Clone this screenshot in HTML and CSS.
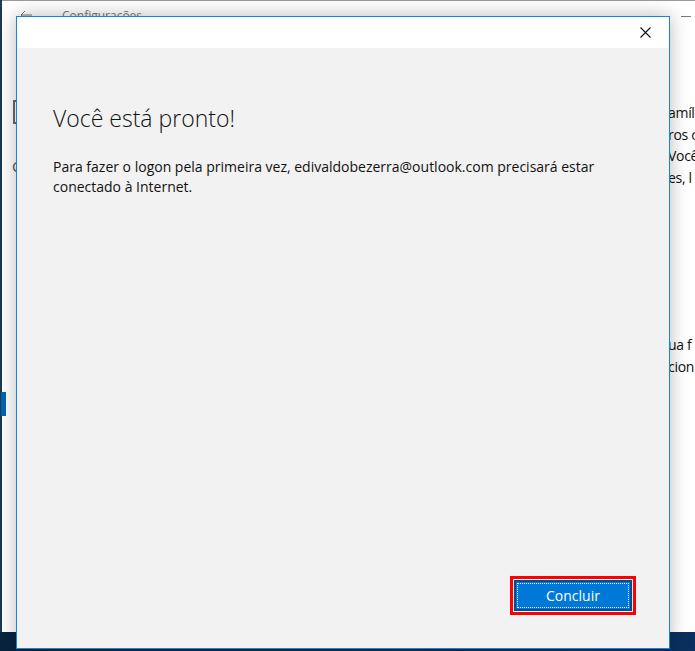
FILE: index.html
```html
<!DOCTYPE html>
<html lang="pt-BR">
<head>
<meta charset="utf-8">
<title>Você está pronto!</title>
<link rel="stylesheet" href="styles.css">
</head>
<body>
<div class="desktop">
  <div class="workspace">
    <div class="desk-strip"></div>
    <div class="settings">
      <div class="settings-top">
        <div class="settings-title">
          <svg class="back" width="12" height="10" viewBox="0 0 12 10"><path d="M5 1 L1 5 L5 9 M1 5 H12" fill="none" stroke="#777" stroke-width="1"/></svg>
          <span class="settings-name">Configurações</span>
        </div>
        <div class="min-btn"></div>
      </div>
      <div class="settings-body">
        <div class="nav">
          <div class="nav-icon"></div>
          <div class="nav-letter">C</div>
          <div class="nav-sel"></div>
        </div>
        <div class="main">
          <div class="main-lines">
            <p>amíl</p>
            <p>ros c</p>
            <p>Você</p>
            <p>es, l</p>
          </div>
          <div class="main-lines second">
            <p>ua f</p>
            <p>cion</p>
          </div>
        </div>
      </div>
    </div>
  </div>
  <div class="taskbar"></div>

  <div class="dialog">
    <div class="dialog-titlebar">
      <svg class="close" width="11" height="11" viewBox="0 0 11 11"><path d="M0.5 0.5 L10.5 10.5 M10.5 0.5 L0.5 10.5" fill="none" stroke="#111" stroke-width="1.1"/></svg>
    </div>
    <div class="dialog-content">
      <h1 class="dialog-heading">Você está pronto!</h1>
      <p class="dialog-text">Para fazer o logon pela primeira vez, edivaldobezerra@outlook.com precisará estar conectado à Internet.</p>
      <div class="dialog-actions">
        <div class="highlight">
          <button class="primary"><span class="focus">Concluir</span></button>
        </div>
      </div>
    </div>
  </div>
</div>
</body>
</html>
```
FILE: styles.css
```css
html, body {
  margin: 0;
  padding: 0;
}
body {
  font-family: "Open Sans", "Noto Sans", sans-serif;
  overflow: hidden;
}
.desktop {
  position: relative;
  width: 695px;
  height: 651px;
  overflow: hidden;
  display: flex;
  flex-direction: column;
  background: #0b2a4e;
}
.workspace {
  height: 632px;
  display: flex;
}
.desk-strip {
  width: 2px;
  background: #1d3a55;
}
.settings {
  flex: 1;
  background: #fff;
  border-top: 1px solid #9a9a9a;
  display: flex;
  flex-direction: column;
  min-width: 0;
}
.settings-top {
  height: 30px;
  display: flex;
  justify-content: space-between;
}
.settings-title {
  display: flex;
  align-items: center;
  gap: 30px;
  padding-left: 18px;
  height: 28px;
}
.settings-name {
  font-size: 12px;
  color: #7a7a7a;
}
.min-btn {
  width: 10px;
  height: 1px;
  background: #7a7a7a;
  margin: 15px 4px 0 0;
}
.settings-body {
  flex: 1;
  display: flex;
  min-width: 0;
}
.nav {
  width: 60px;
  flex: none;
  display: flex;
  flex-direction: column;
}
.nav-icon {
  width: 14px;
  height: 24px;
  border: 2px solid #6a6a6a;
  margin: 69px 0 0 11px;
  box-sizing: border-box;
}
.nav-letter {
  font-size: 15px;
  color: #555;
  margin: 32px 0 0 10px;
}
.nav-sel {
  width: 5px;
  height: 24px;
  background: #0063b1;
  margin: 216px 0 0 -1px;
}
.main {
  flex: 1;
  min-width: 0;
  padding-left: 606px;
  overflow: hidden;
  white-space: nowrap;
  padding-top: 71px;
}
.main-lines p {
  margin: 0;
  font-size: 14px;
  letter-spacing: -0.3px;
  line-height: 21.5px;
  color: #111;
}
.main-lines.second {
  margin-top: 146px;
}
.taskbar {
  flex: 1;
  background: linear-gradient(90deg, #07233f 0%, #0b2c52 60%, #0a3060 100%);
}

.dialog {
  position: absolute;
  left: 16px;
  top: 16px;
  width: 654px;
  height: 633px;
  box-sizing: border-box;
  border: 1px solid #1883d7;
  background: #f2f2f2;
  box-shadow: 0 0 18px rgba(0, 0, 0, 0.28);
  display: flex;
  flex-direction: column;
}
.dialog-titlebar {
  height: 31px;
  background: #fff;
  display: flex;
  justify-content: flex-end;
  align-items: center;
}
.close {
  margin-right: 18px;
}
.dialog-content {
  flex: 1;
  padding: 0 33px 33px 36px;
  display: flex;
  flex-direction: column;
}
.dialog-heading {
  margin: 54px 0 0 0;
  font-size: 23px;
  font-weight: 300;
  line-height: 32px;
  color: #111;
}
.dialog-text {
  margin: 23px 0 0 0;
  font-size: 14px;
  line-height: 20px;
  color: #111;
}
.dialog-actions {
  margin-top: auto;
  display: flex;
  justify-content: flex-end;
}
.highlight {
  border: 3px solid #ff0000;
  padding: 1px;
  background: #f2f2f2;
}
.primary {
  display: block;
  width: 118px;
  height: 31px;
  margin: 0;
  padding: 1px;
  border: 2px solid #00508f;
  background: #0078d7;
  color: #fff;
  font-family: "Open Sans", "Noto Sans", sans-serif;
  font-size: 14px;
  box-sizing: border-box;
}
.focus {
  display: flex;
  align-items: center;
  justify-content: center;
  height: 100%;
  border: 1px dotted #ffffff;
  box-sizing: border-box;
}
```
